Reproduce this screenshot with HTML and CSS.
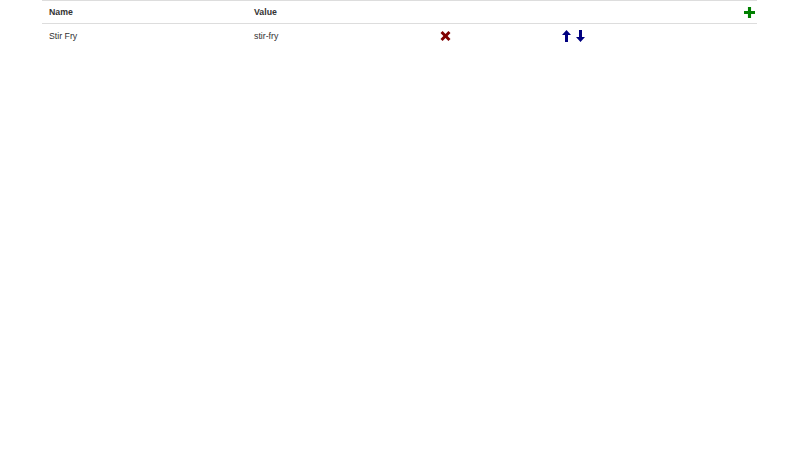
FILE: index.html
```html
<!DOCTYPE html>
<html>
<head>
<meta charset="utf-8">
<link rel="stylesheet" href="styles.css">
</head>
<body>
<div class="wrap">
  <table class="grid">
    <colgroup>
      <col class="c1"><col class="c2"><col class="c3"><col class="c4">
    </colgroup>
    <thead>
      <tr>
        <th>Name</th>
        <th>Value</th>
        <th></th>
        <th class="right">
          <svg class="ico plus" viewBox="0 0 12 12" width="11" height="11"><path d="M4.3 0h3.4v4.3H12v3.4H7.7V12H4.3V7.7H0V4.3h4.3z" fill="#008000"/></svg>
        </th>
      </tr>
    </thead>
    <tbody>
      <tr>
        <td>Stir Fry</td>
        <td>stir-fry</td>
        <td class="icon-cell">
          <svg class="ico rem" viewBox="0 0 10 10" width="11" height="10"><path d="M0 2.1L2.1 0L5 2.9L7.9 0L10 2.1L7.1 5L10 7.9L7.9 10L5 7.1L2.1 10L0 7.9L2.9 5z" fill="#800000"/></svg>
        </td>
        <td class="icon-cell">
          <svg class="ico arr" viewBox="0 0 9 12" width="9" height="12"><path d="M4.5 0L9 5H6v7H3V5H0z" fill="#000080"/></svg>
          <svg class="ico arr gap" viewBox="0 0 9 12" width="9" height="12"><path d="M4.5 12L9 7H6V0H3v7H0z" fill="#000080"/></svg>
        </td>
      </tr>
    </tbody>
  </table>
</div>
</body>
</html>
```
FILE: styles.css
```css
html, body {
  margin: 0;
  padding: 0;
  background: #fff;
}
body {
  font-family: "Liberation Sans", Arial, sans-serif;
  font-size: 8.75px;
  line-height: 12.5px;
  color: #333;
}
.wrap {
  width: 715px;
  margin-left: 42px;
}
.grid {
  width: 100%;
  border-collapse: collapse;
  table-layout: fixed;
  border-top: 1px solid #ddd;
}
.c1 { width: 207px; }
.c2 { width: 186px; }
.c3 { width: 122px; }
.grid th {
  text-align: left;
  font-weight: bold;
  padding: 5px 7px 4px 7px;
  height: 13px;
  border-bottom: 1px solid #ddd;
  vertical-align: middle;
}
.grid td {
  padding: 6px 5px 4px 5px;
  height: 12px;
  vertical-align: middle;
}
.grid td:first-child { padding-left: 7px; }
.grid th:nth-child(2), .grid td:nth-child(2) { padding-left: 5px; }
.grid th.right {
  text-align: right;
  padding-right: 2px;
}
.icon-cell {
  font-size: 0;
  line-height: 0;
}
.ico {
  display: inline-block;
  vertical-align: middle;
}
.arr.gap { margin-left: 5px; }
```
